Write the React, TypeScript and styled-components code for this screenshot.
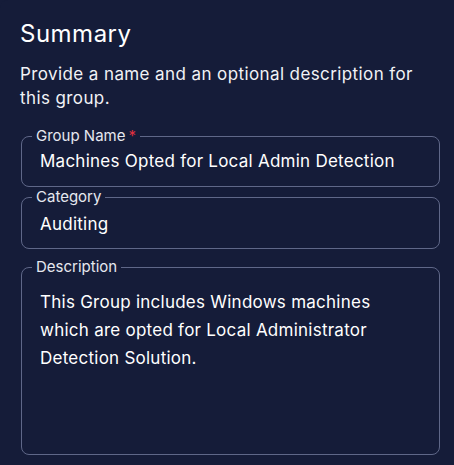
import React, { FC } from "react";
import styled, { createGlobalStyle } from "styled-components";

const GlobalStyle = createGlobalStyle`
  html, body {
    margin: 0;
    padding: 0;
    background: #151c39;
  }
  body {
    font-family: Inter, "Noto Sans", "Liberation Sans", sans-serif;
    color: #ffffff;
  }
`;

interface FieldProps {
  label: string;
  required?: boolean;
  top: number;
  bottom: number;
  space?: number;
  lineHeight?: number;
  children: React.ReactNode;
}

const Field: FC<FieldProps> = ({ label, required, top, bottom, space, lineHeight, children }) => (
  <Box $space={space ?? 0}>
    <Legend>
      {label}
      {required && <Star>*</Star>}
    </Legend>
    <Value $top={top} $bottom={bottom} $lh={lineHeight ?? 24}>
      {children}
    </Value>
  </Box>
);

const App: FC = () => {
  return (
    <Panel>
      <GlobalStyle />
      <Title>Summary</Title>
      <Subtitle>Provide a name and an optional description for this group.</Subtitle>
      <Fields>
        <Field label="Group Name" required top={5} bottom={13}>
          Machines Opted for Local Admin Detection
        </Field>
        <Field label="Category" top={7} bottom={12}>
          Auditing
        </Field>
        <Field label="Description" space={8} top={13} bottom={82} lineHeight={28}>
          This Group includes Windows machines which are opted for Local Administrator Detection Solution.
        </Field>
      </Fields>
    </Panel>
  );
};

const Panel = styled.section`
  box-sizing: border-box;
  width: 454px;
  min-height: 465px;
  padding: 19px 14px 0 20px;
  background: #151c39;
  border-top-left-radius: 8px;
`;

const Title = styled.h2`
  margin: 0;
  font-size: 24px;
  line-height: 30px;
  font-weight: 400;
  letter-spacing: 0.5px;
  color: #ffffff;
`;

const Subtitle = styled.p`
  margin: 13px 0 0;
  font-size: 17px;
  line-height: 24px;
  letter-spacing: 0.4px;
  color: #f1f2f6;
`;

const Fields = styled.div`
  display: flex;
  flex-direction: column;
  gap: 2px;
  margin-top: 18px;
`;

const Box = styled.fieldset<{ $space: number }>`
  margin: ${p => p.$space}px 0 0 1px;
  padding: 0 10px;
  border: 1px solid #5f6788;
  border-radius: 8px;
  min-width: 0;
`;

const Legend = styled.legend`
  padding: 0 4px;
  font-size: 15px;
  line-height: 16px;
  color: #e6e8ef;
`;

const Star = styled.span`
  color: #e0303f;
  margin-left: 3px;
`;

const Value = styled.div<{ $top: number; $bottom: number; $lh: number }>`
  padding: ${p => p.$top}px 14px ${p => p.$bottom}px 8px;
  font-size: 17px;
  line-height: ${p => p.$lh}px;
  letter-spacing: 0.25px;
  color: #ffffff;
`;

export default App;
